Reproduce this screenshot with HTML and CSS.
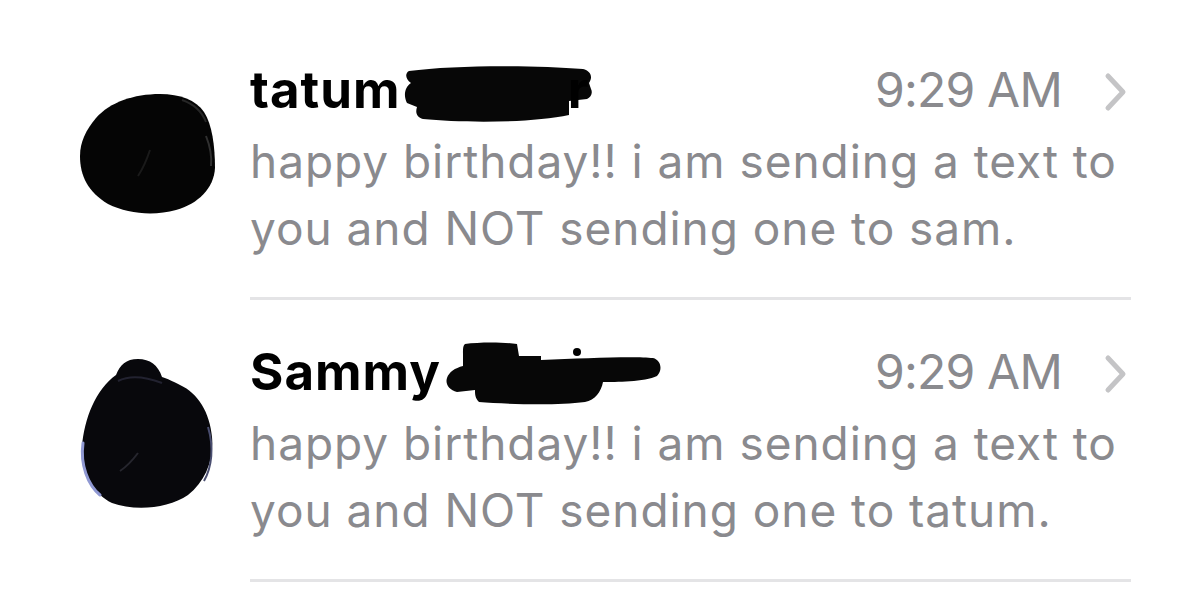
FILE: index.html
```html
<!DOCTYPE html>
<html>
<head>
<meta charset="utf-8">
<link rel="stylesheet" href="styles.css">
</head>
<body>
<div class="list">
  <div class="row">
    <div class="avatar-col">
      <svg class="avatar a1" width="138" height="122" viewBox="0 0 138 122">
        <path d="M18 26 C32 10 56 2 82 2 C102 2 118 8 126 20 C134 32 137 54 137 76 C136 96 120 112 98 118 C76 124 50 122 30 112 C10 100 2 84 2 64 C2 50 8 38 18 26 Z" fill="#050505"/>
        <path d="M104 8 C116 12 124 20 128 30" fill="none" stroke="#262626" stroke-width="2"/>
        <path d="M72 58 C68 70 64 78 60 84" fill="none" stroke="#1a1a1a" stroke-width="2"/>
        <path d="M128 44 C132 54 134 64 133 74" fill="none" stroke="#303030" stroke-width="2"/>
      </svg>
    </div>
    <div class="content">
      <div class="top">
        <div class="name">tatum<span class="surname"><svg class="redact r1" width="192" height="60" viewBox="0 0 192 60"><path d="M6 8 C50 2 130 2 180 6 C188 8 190 14 186 20 L188 26 C190 30 188 34 184 36 L166 38 L166 52 C130 60 60 60 20 56 C14 54 12 50 14 44 L4 40 C0 32 2 24 8 20 C2 16 2 10 6 8 Z" fill="#070707"/></svg><span class="tail">r</span></span></div>
        <div class="meta"><span class="time">9:29 AM</span><svg class="chev" width="26" height="40" viewBox="0 0 26 40"><path d="M5 4 L20 20 L5 36" fill="none" stroke="#c4c4c6" stroke-width="5" stroke-linecap="round" stroke-linejoin="round"/></svg></div>
      </div>
      <p class="msg">happy birthday!! i am sending a text to you and NOT sending one to sam.</p>
    </div>
  </div>
  <div class="row">
    <div class="avatar-col">
      <svg class="avatar a2" width="136" height="152" viewBox="0 0 136 152">
        <path d="M4 90 C2 114 14 136 34 146 C56 154 90 152 110 138 C128 124 136 102 134 80 C132 56 120 36 102 28 C94 24 90 22 84 20 C80 8 72 2 60 2 C48 2 42 8 38 18 C18 32 6 62 4 90 Z" fill="#08080c"/>
        <path d="M5 86 C2 108 10 128 22 138" fill="none" stroke="#8f98d2" stroke-width="3" stroke-linecap="round"/>
        <path d="M130 70 C136 90 134 110 126 124" fill="none" stroke="#4a4e70" stroke-width="2"/>
        <path d="M40 24 C52 18 68 20 84 26" fill="none" stroke="#222230" stroke-width="2"/>
        <path d="M60 96 C54 104 48 110 42 114" fill="none" stroke="#26262e" stroke-width="2"/>
      </svg>
    </div>
    <div class="content">
      <div class="top">
        <div class="name">Sammy<span class="surname"><svg class="redact r2" width="218" height="64" viewBox="0 0 218 64"><path d="M20 2 C34 0 58 0 72 2 L74 14 L96 14 L96 18 C140 16 190 14 208 16 C216 18 218 28 212 34 C200 40 170 40 158 40 C156 50 150 58 140 60 C110 64 60 62 34 60 C30 56 30 52 30 48 L12 50 C4 48 0 42 2 36 C4 30 10 26 18 24 L18 12 C18 6 18 4 20 2 Z" fill="#070707"/><circle cx="132" cy="10" r="4" fill="#000"/></svg></span></div>
        <div class="meta"><span class="time">9:29 AM</span><svg class="chev" width="26" height="40" viewBox="0 0 26 40"><path d="M5 4 L20 20 L5 36" fill="none" stroke="#c4c4c6" stroke-width="5" stroke-linecap="round" stroke-linejoin="round"/></svg></div>
      </div>
      <p class="msg">happy birthday!! i am sending a text to you and NOT sending one to tatum.</p>
    </div>
  </div>
</div>
</body>
</html>
```
FILE: styles.css
```css
* { box-sizing: border-box; }
body {
  margin: 0;
  background: #ffffff;
  font-family: Inter, "Liberation Sans", Arial, sans-serif;
  width: 1179px;
  height: 590px;
  overflow: hidden;
}
.list {
  padding-top: 18px;
}
.row {
  display: flex;
  height: 282px;
}
.avatar-col {
  width: 250px;
  flex: none;
  padding-left: 78px;
  padding-top: 74px;
}
.avatar {
  display: block;
}
.avatar.a2 {
  margin-top: -17px;
}
.content {
  flex: 1;
  margin-right: 48px;
  padding-top: 37px;
  border-bottom: 3px solid #e4e4e6;
}
.top {
  display: flex;
  justify-content: space-between;
  align-items: flex-start;
  height: 70px;
}
.name {
  font-size: 51px;
  font-weight: 700;
  color: #000;
  line-height: 70px;
  display: flex;
  align-items: flex-start;
  letter-spacing: 1px;
}
.surname {
  position: relative;
  display: flex;
  align-items: flex-start;
}
.redact {
  margin-left: 2px;
  margin-top: 8px;
}
.tail {
  position: absolute;
  right: 6px;
  top: 0;
  letter-spacing: 0;
}
.redact.r2 {
  margin-left: 4px;
  margin-top: 5px;
}
.meta {
  display: flex;
  align-items: flex-start;
  height: 70px;
  gap: 41px;
  margin-right: 2px;
}
.time {
  font-size: 48px;
  font-weight: 400;
  line-height: 70px;
  color: #8a8a8e;
  letter-spacing: -0.8px;
}
.chev {
  margin-top: 17px;
}
.msg {
  margin: 3px 0 0;
  font-size: 46px;
  line-height: 67px;
  color: #8a8a8e;
  letter-spacing: 0.95px;
}
```
